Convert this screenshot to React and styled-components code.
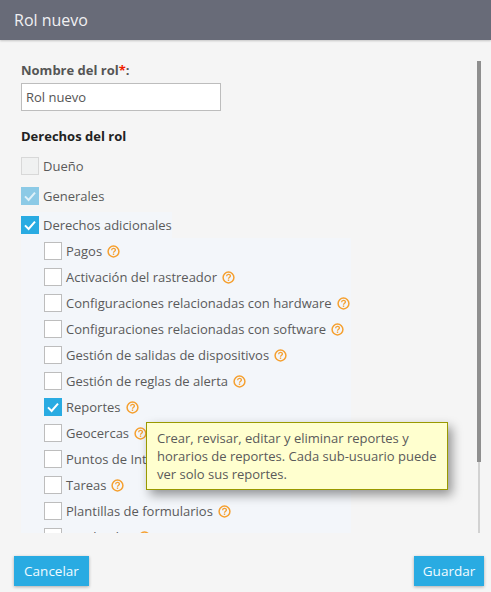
import React from "react";
import styled, { createGlobalStyle } from "styled-components";

const Global = createGlobalStyle`
  html, body { margin: 0; padding: 0; background: #f5f5f5; }
  body { font-family: "Open Sans", "Liberation Sans", sans-serif; overflow: hidden; }
  * { box-sizing: border-box; }
`;

const Page = styled.div`
  position: relative;
  width: 491px;
  height: 592px;
  background: #f5f5f5;
  display: flex;
  flex-direction: column;
  overflow: hidden;
`;
const Header = styled.header`
  flex: 0 0 40px;
  height: 40px;
  background: #686b78;
  color: #f0f0f2;
  font-size: 16px;
  line-height: 40px;
  padding-left: 14px;
  box-shadow: 0 1px 2px rgba(0, 0, 0, 0.2);
`;
const Body = styled.div`
  position: relative;
  height: 472px;
  margin-top: 21px;
  overflow: hidden;
  padding-left: 21px;
`;
const FieldLabel = styled.div`
  font-size: 13px;
  font-weight: 700;
  line-height: 18px;
  color: ${(p) => p.$color || "#555"};
`;
const Req = styled.span`
  color: #f01e00;
`;
const NameInput = styled.input`
  display: block;
  width: 200px;
  height: 28px;
  border: 1px solid #bdbdbd;
  background: #fff;
  padding: 0 4px;
  font: 13px "Open Sans", sans-serif;
  color: #555;
  outline: none;
  margin: 4px 0 16px;
`;
const Row = styled.div`
  display: flex;
  align-items: center;
  height: 18px;
  font-size: 13px;
  color: #5a5a5a;
  margin-bottom: ${(p) => p.$mb ?? 8}px;
`;
const ActiveRow = styled(Row)`
  width: 151px;
  height: 26px;
  margin: -4px 0 0;
  background: #f3f6fa;
`;
const Box = styled.span`
  flex: 0 0 18px;
  width: 18px;
  height: 18px;
  display: flex;
  align-items: center;
  justify-content: center;
  margin-right: 4px;
  border: ${(p) =>
    p.$state === "on" || p.$state === "dim" ? "none" : p.$state === "off" ? "1px solid #d8d8d8" : "1px solid #bdbdbd"};
  background: ${(p) =>
    p.$state === "on" ? "#29abe2" : p.$state === "dim" ? "#8ccae6" : p.$state === "off" ? "#f0f1f1" : "#fff"};
`;
const SubList = styled.div`
  width: 330px;
  padding: 4px 0 0 23px;
  background: #f3f6fa;
`;
const TopRows = styled.div`
  margin-top: 12px;
`;
const HelpSvg = styled.svg`
  margin-left: 5px;
  flex: none;
`;
const Scrollbar = styled.div`
  position: absolute;
  left: 478px;
  top: 61px;
  width: 2px;
  height: 472px;
  background: #d2d2d2;
`;
const Thumb = styled.div`
  position: absolute;
  left: -1px;
  top: 0;
  width: 4px;
  height: 401px;
  background: #8f8f8f;
`;
const Tooltip = styled.div`
  position: absolute;
  left: 146px;
  top: 422px;
  width: 302px;
  height: 68px;
  padding: 6px 10px;
  background: #ffffcf;
  border: 1px solid #999900;
  font-size: 13px;
  line-height: 18px;
  color: #5a5a5a;
  box-shadow: 4px 5px 10px rgba(0, 0, 0, 0.4);
`;
const Footer = styled.footer`
  display: flex;
  justify-content: space-between;
  padding: 23px 7px 0 14px;
`;
const Button = styled.button`
  height: 30px;
  width: ${(p) => p.$w}px;
  border: none;
  background: #29abe2;
  color: #f2fbff;
  font: 500 13.5px "Open Sans", sans-serif;
  padding: 0;
  box-shadow: 0 1px 3px rgba(0, 0, 0, 0.3);
`;

const Check = ({ color = "#fff" }) => (
  <svg width="18" height="18" viewBox="0 0 18 18" aria-hidden="true">
    <path d="M4 9.4 L7.6 13 L14 5.6" fill="none" stroke={color} strokeWidth="2" />
  </svg>
);

const Help = () => (
  <HelpSvg width="13" height="13" viewBox="0 0 13 13" aria-hidden="true">
    <circle cx="6.5" cy="6.5" r="5.4" fill="none" stroke="#f5a030" strokeWidth="1.5" />
    <path d="M4.6 5.2 C4.7 2.9 8.4 2.9 8.4 5 C8.4 6.2 6.6 6.2 6.5 7.7" fill="none" stroke="#f5a030" strokeWidth="1.3" />
    <rect x="5.8" y="8.5" width="1.4" height="1.4" fill="#f5a030" />
  </HelpSvg>
);

const items = [
  ["Pagos"],
  ["Activación del rastreador"],
  ["Configuraciones relacionadas con hardware"],
  ["Configuraciones relacionadas con software"],
  ["Gestión de salidas de dispositivos"],
  ["Gestión de reglas de alerta"],
  ["Reportes", true],
  ["Geocercas"],
  ["Puntos de Interés"],
  ["Tareas"],
  ["Plantillas de formularios"],
  ["Empleados"],
  ["Vehículos"],
];

export default function App() {
  return (
    <Page>
      <Global />
      <Header>Rol nuevo</Header>
      <Body>
        <FieldLabel>
          Nombre del rol<Req>*</Req>:
        </FieldLabel>
        <NameInput defaultValue="Rol nuevo" />
        <FieldLabel $color="#222">Derechos del rol</FieldLabel>
        <TopRows>
          <Row $mb={12}>
            <Box $state="off" />
            Dueño
          </Row>
          <Row $mb={11}>
            <Box $state="dim">
              <Check color="#dff1f9" />
            </Box>
            Generales
          </Row>
          <ActiveRow>
            <Box $state="on">
              <Check />
            </Box>
            Derechos adicionales
          </ActiveRow>
        </TopRows>
        <SubList>
          {items.map(([label, on]) => (
            <Row key={label} $mb={8}>
              <Box $state={on ? "on" : undefined}>{on && <Check />}</Box>
              {label}
              <Help />
            </Row>
          ))}
        </SubList>
      </Body>
      <Footer>
        <Button $w={75}>Cancelar</Button>
        <Button $w={70}>Guardar</Button>
      </Footer>
      <Scrollbar>
        <Thumb />
      </Scrollbar>
      <Tooltip>
        Crear, revisar, editar y eliminar reportes y horarios de reportes. Cada sub-usuario puede ver solo sus reportes.
      </Tooltip>
    </Page>
  );
}
